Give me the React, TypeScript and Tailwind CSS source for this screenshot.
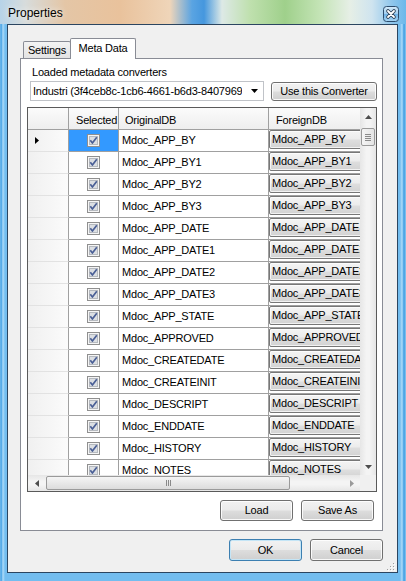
import React from "react";

const rows = [
  "Mdoc_APP_BY",
  "Mdoc_APP_BY1",
  "Mdoc_APP_BY2",
  "Mdoc_APP_BY3",
  "Mdoc_APP_DATE",
  "Mdoc_APP_DATE1",
  "Mdoc_APP_DATE2",
  "Mdoc_APP_DATE3",
  "Mdoc_APP_STATE",
  "Mdoc_APPROVED",
  "Mdoc_CREATEDATE",
  "Mdoc_CREATEINIT",
  "Mdoc_DESCRIPT",
  "Mdoc_ENDDATE",
  "Mdoc_HISTORY",
  "Mdoc_NOTES",
];

const btnFace =
  "bg-[linear-gradient(#f2f2f2_0%,#ebebeb_48%,#dddddd_52%,#cfcfcf_100%)]";

function Btn({
  children,
  className = "",
  def = false,
}: {
  children: React.ReactNode;
  className?: string;
  def?: boolean;
}) {
  return (
    <div
      className={`flex items-center justify-center rounded-[3px] border ${
        def
          ? "border-[#3c7fb1] shadow-[inset_0_0_0_1px_#c4e5f6]"
          : "border-[#707070] shadow-[inset_0_0_0_1px_rgba(255,255,255,0.85)]"
      } ${btnFace} ${className}`}
    >
      {children}
    </div>
  );
}

function Check() {
  return (
    <svg width="13" height="13" viewBox="0 0 13 13">
      <rect x="0.5" y="0.5" width="12" height="12" fill="#f5f5f5" stroke="#8f8f8f" />
      <rect x="2.5" y="2.5" width="8" height="8" fill="#dcdfe3" stroke="#b5b9bf" />
      <path
        d="M3.3 6.3 L5.4 9 L9.8 3.2"
        stroke="#4a5f96"
        strokeWidth="1.7"
        fill="none"
        strokeLinejoin="round"
      />
    </svg>
  );
}

function Tri({ dir, color = "#4d4d4d" }: { dir: "up" | "down" | "left" | "right"; color?: string }) {
  if (dir === "up")
    return (
      <svg width="7" height="4" viewBox="0 0 7 4">
        <polygon points="3.5,0 7,4 0,4" fill={color} />
      </svg>
    );
  if (dir === "down")
    return (
      <svg width="7" height="4" viewBox="0 0 7 4">
        <polygon points="0,0 7,0 3.5,4" fill={color} />
      </svg>
    );
  if (dir === "left")
    return (
      <svg width="4" height="7" viewBox="0 0 4 7">
        <polygon points="4,0 4,7 0,3.5" fill={color} />
      </svg>
    );
  return (
    <svg width="4" height="7" viewBox="0 0 4 7">
      <polygon points="0,0 4,3.5 0,7" fill={color} />
    </svg>
  );
}

function CloseIcon() {
  return (
    <svg width="16" height="16" viewBox="0 0 16 16">
      <defs>
        <linearGradient id="cbg" x1="0" y1="0" x2="0" y2="1">
          <stop offset="0" stopColor="#d5ebfa" />
          <stop offset="0.5" stopColor="#9fcdef" />
          <stop offset="0.52" stopColor="#6fb2e6" />
          <stop offset="1" stopColor="#a9d6f4" />
        </linearGradient>
      </defs>
      <rect x="0.5" y="0.5" width="15" height="15" rx="3" fill="url(#cbg)" stroke="#2c4d6e" />
      <path d="M5 5 L11 11 M11 5 L5 11" stroke="#2a3d52" strokeWidth="3.6" strokeLinecap="round" />
      <path d="M5 5 L11 11 M11 5 L5 11" stroke="#ffffff" strokeWidth="1.8" strokeLinecap="round" />
    </svg>
  );
}

function Grip() {
  const pts = [
    [6, 0],
    [3, 3],
    [6, 3],
    [0, 6],
    [3, 6],
    [6, 6],
  ];
  return (
    <svg width="8" height="8" viewBox="0 0 8 8">
      {pts.map(([x, y], i) => (
        <g key={i}>
          <rect x={x + 1} y={y + 1} width="1" height="1" fill="#ffffff" />
          <rect x={x} y={y} width="1" height="1" fill="#a0a0a0" />
        </g>
      ))}
    </svg>
  );
}

export default function App() {
  return (
    <div className="w-[406px] h-[581px] flex flex-col overflow-hidden font-['Liberation_Sans',Arial,sans-serif] text-[11px] tracking-[-0.2px] text-black bg-[linear-gradient(90deg,#8fc8ee_0px,#3a9be2_1px,#aedbf8_3px,#73bdef_5px,#73bdef_400px,#aedbf8_402px,#3a9be2_404px,#8fc8ee_406px)]">
      {/* Title bar */}
      <div className="h-[24px] shrink-0 flex items-start justify-between pl-[8px] pr-[7px] bg-[linear-gradient(90deg,#b7d3e8_0px,#d7dcdc_25px,#e4c6a6_65px,#e9c29c_120px,#efd5b9_170px,#5aa4e2_192px,#4597de_204px,#dde9e6_222px,#bfe0ae_250px,#9fd08b_285px,#c4e4b6_320px,#e6efe6_350px,#cfe4ef_372px,#8fc6ec_392px,#6cb8ea_406px)]">
        <div className="mt-[6px] text-[12px] tracking-normal leading-[15px] [text-shadow:0_0_6px_rgba(255,255,255,0.9)]">
          Properties
        </div>
        <div className="mt-[6px] w-[16px] h-[16px]">
          <CloseIcon />
        </div>
      </div>

      {/* Frame body */}
      <div className="flex-1 flex pl-[7px] pr-[8px] pb-[8px]">
        <div className="relative flex-1 border border-[#2b4560] bg-[#f0f0f0] flex flex-col pt-[13px] pl-[12px] pr-[14px]">
          {/* Tabs */}
          <div className="h-[20px] flex items-end pl-[3px]">
            <div className="h-[17px] w-[48px] border border-b-0 border-[#898c95] rounded-t-[2px] bg-[linear-gradient(#f3f3f3,#e3e3e3)] text-center pt-[2px] leading-[13px]">
              Settings
            </div>
            <div className="relative z-10 -ml-[1px] -mb-[1px] h-[21px] w-[66px] border border-b-0 border-[#898c95] rounded-t-[2px] bg-white text-center pt-[3px] leading-[13px]">
              Meta Data
            </div>
          </div>

          {/* Panel */}
          <div className="h-[473px] border border-[#898c95] bg-white flex flex-col">
            <div className="mt-[7px] h-[13px] leading-[13px] pl-[11px]">Loaded metadata converters</div>
            <div className="mt-[2px] h-[20px] flex items-end pl-[9px] pr-[5px] gap-[7px]">
              <div className="w-[234px] h-[20px] border border-[#c0c3c8] bg-white flex items-center pl-[2px]">
                <div className="w-[209px] overflow-hidden whitespace-nowrap leading-[13px]">
                  Industri (3f4ceb8c-1cb6-4661-b6d3-84079695a1c2)
                </div>
                <div className="ml-[9px] shrink-0">
                  <Tri dir="down" color="#000000" />
                </div>
              </div>
              <Btn className="w-[106px] h-[19px] leading-[13px]">Use this Converter</Btn>
            </div>

            {/* Grid */}
            <div className="mt-[6px] ml-[6px] mr-[5px] h-[385px] border border-[#5a5a5a] flex flex-col">
              <div className="h-[367px] flex">
                <div className="w-[332px] overflow-hidden flex flex-col">
                  {/* Header */}
                  <div className="h-[22px] shrink-0 flex border-b border-[#a0a0a0] bg-[linear-gradient(#fbfbfb,#eeeeee)]">
                    <div className="w-[41px] shrink-0 border-r border-[#a0a0a0]" />
                    <div className="w-[50px] shrink-0 border-r border-[#a0a0a0] pl-[7px] pt-[6px] leading-[13px] whitespace-nowrap overflow-hidden">
                      Selected
                    </div>
                    <div className="w-[150px] shrink-0 border-r border-[#a0a0a0] pl-[6px] pt-[6px] leading-[13px]">
                      OriginalDB
                    </div>
                    <div className="w-[120px] shrink-0 pl-[7px] pt-[6px] leading-[13px]">ForeignDB</div>
                  </div>
                  {/* Body */}
                  <div className="h-[345px] overflow-hidden">
                    {rows.map((r, i) => (
                      <div key={r} className="h-[22px] flex">
                        <div className="w-[41px] shrink-0 border-r border-b border-r-[#a0a0a0] border-b-[#e2e2e2] bg-[linear-gradient(90deg,#f0f0f0,#fbfbfb)] flex items-center pl-[7px]">
                          {i === 0 && <Tri dir="right" color="#000000" />}
                        </div>
                        <div
                          className={`w-[50px] shrink-0 border-r border-b border-[#a0a0a0] flex items-center justify-center pr-[1px] ${
                            i === 0 ? "bg-[#3399ff]" : "bg-white"
                          }`}
                        >
                          <Check />
                        </div>
                        <div className="w-[150px] shrink-0 border-r border-b border-[#a0a0a0] flex items-center pl-[3px] leading-[13px] whitespace-nowrap overflow-hidden">
                          {r}
                        </div>
                        <div className="w-[120px] shrink-0 border-b border-[#a0a0a0]">
                          <div className="h-[19px] border border-[#777777] rounded-[2px] bg-[linear-gradient(#f4f4f4_0%,#ececec_48%,#dedede_52%,#d2d2d2_100%)] shadow-[inset_0_0_0_1px_rgba(255,255,255,0.7)] flex items-center pl-[2px] leading-[13px] whitespace-nowrap overflow-hidden">
                            {r}
                          </div>
                        </div>
                      </div>
                    ))}
                  </div>
                </div>
                {/* Vertical scrollbar */}
                <div className="w-[16px] flex flex-col bg-[linear-gradient(90deg,#e6e6e6,#f4f4f4_40%,#f4f4f4_60%,#e6e6e6)]">
                  <div className="h-[17px] flex items-center justify-center">
                    <Tri dir="up" />
                  </div>
                  <div className="mt-[3px] mx-[1px] h-[18px] rounded-[2px] border border-[#9a9a9a] bg-[linear-gradient(90deg,#f5f5f5,#e4e4e4)] flex flex-col items-center justify-center gap-[1px]">
                    <div className="w-[6px] h-[1px] bg-[#8a8a8a]" />
                    <div className="w-[6px] h-[1px] bg-[#8a8a8a]" />
                    <div className="w-[6px] h-[1px] bg-[#8a8a8a]" />
                    <div className="w-[6px] h-[1px] bg-[#8a8a8a]" />
                  </div>
                  <div className="flex-1" />
                  <div className="h-[17px] flex items-center justify-center">
                    <Tri dir="down" />
                  </div>
                </div>
              </div>
              {/* Horizontal scrollbar */}
              <div className="h-[16px] flex">
                <div className="w-[332px] flex items-center bg-[linear-gradient(#e6e6e6,#f4f4f4_40%,#f4f4f4_60%,#e6e6e6)]">
                  <div className="w-[17px] h-full flex items-center justify-center">
                    <Tri dir="left" />
                  </div>
                  <div className="ml-[1px] w-[244px] h-[14px] rounded-[2px] border border-[#9a9a9a] bg-[linear-gradient(#f5f5f5,#dcdcdc)] flex items-center justify-center gap-[1px]">
                    <div className="w-[1px] h-[6px] bg-[#8a8a8a]" />
                    <div className="w-[1px] h-[6px] bg-[#8a8a8a]" />
                    <div className="w-[1px] h-[6px] bg-[#8a8a8a]" />
                  </div>
                  <div className="flex-1" />
                  <div className="w-[17px] h-full flex items-center justify-center">
                    <Tri dir="right" color="#9a9a9a" />
                  </div>
                </div>
                <div className="w-[16px] bg-[#f0f0f0]" />
              </div>
            </div>

            <div className="mt-[8px] h-[21px] flex justify-end gap-[8px] pr-[8px]">
              <Btn className="w-[73px] h-[21px] leading-[13px]">Load</Btn>
              <Btn className="w-[73px] h-[21px] leading-[13px]">Save As</Btn>
            </div>
          </div>

          {/* Dialog buttons */}
          <div className="mt-[8px] h-[22px] flex justify-end gap-[8px]">
            <Btn def className="w-[73px] h-[22px] leading-[13px]">
              OK
            </Btn>
            <Btn className="w-[73px] h-[22px] leading-[13px]">Cancel</Btn>
          </div>

          <div className="absolute right-[2px] bottom-[1px]">
            <Grip />
          </div>
        </div>
      </div>
    </div>
  );
}
